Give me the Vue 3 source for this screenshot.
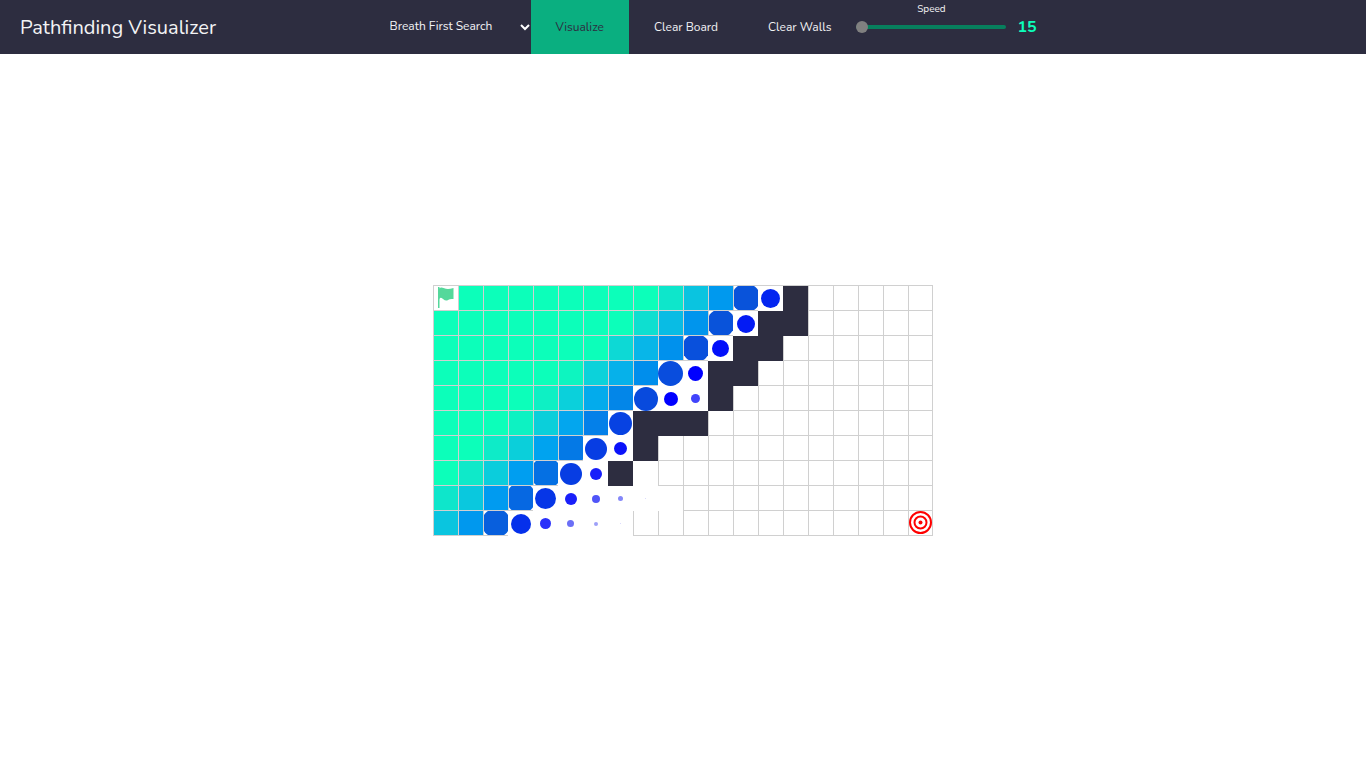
<script setup>
import { ref } from 'vue'

const algorithm = ref('Breath First Search')
const speed = ref(15)

const M = '#0cffba'
const dot = (size, color) => ({ size, color, kind: size > 23 ? 'dot wide' : 'dot' })
const oct = (radius, color) => ({ radius, color, kind: 'full' })
const fill = (color) => ({ radius: 0, color, kind: 'full' })
const times = (n, make) => Array.from({ length: n }, make)
const mint = (n) => times(n, () => fill(M))
const walls = (n) => times(n, () => ({ kind: 'wall' }))
const open = (n) => times(n, () => ({ kind: 'open' }))
const blank = (n) => times(n, () => ({ kind: 'blank' }))

const rows = [
  [{ kind: 'start' }, ...mint(8), fill('#0ee6cb'), fill('#0ac4e0'), fill('#0099ee'), oct(13, '#0953da'), dot(19, '#0425f0'), ...walls(1), ...open(5)],
  [...mint(8), fill('#0edfd0'), fill('#09bce4'), fill('#0095ed'), oct(14, '#0953da'), dot(18, '#031bf4'), ...walls(2), ...open(5)],
  [...mint(7), fill('#0dd9d5'), fill('#08b6e8'), fill('#0091ed'), oct(14, '#0950dc'), dot(17, '#020ffa'), ...walls(2), ...open(6)],
  [...mint(5), fill('#0df5c0'), fill('#0cd2da'), fill('#06b1ea'), fill('#008eec'), dot(25, '#094ddd'), dot(15, '#0000ff'), ...walls(2), ...open(7)],
  [...mint(4), fill('#0ef0c4'), fill('#0bd0db'), fill('#03abec'), fill('#0386e8'), dot(24, '#084add'), dot(14, '#0000ff'), dot(9, '#4144fb'), ...walls(1), ...open(8)],
  [...mint(3), fill('#0df2c2'), fill('#0bcfda'), fill('#03a6ee'), oct(7, '#0480e9'), dot(23, '#0742e2'), ...walls(3), ...open(9)],
  [...mint(2), fill('#0eebc8'), fill('#0bcfda'), fill('#00a3ef'), oct(8, '#0479e6'), dot(22, '#073de3'), dot(13, '#0a12fa'), ...walls(1), ...open(11)],
  [...mint(1), fill('#0fe9c9'), fill('#0bcddc'), fill('#009ef0'), oct(10, '#0570e3'), dot(22, '#073de3'), dot(12, '#171efa'), ...walls(1), ...blank(1), ...open(11)],
  [fill('#0ee6cb'), fill('#0ac8de'), fill('#009bf0'), oct(11, '#0668e2'), dot(21, '#0636e7'), dot(12, '#191ffa'), dot(8, '#5055f8'), dot(5, '#8487f9'), dot(1, '#cfd0fd'), ...blank(1), ...open(10)],
  [fill('#0ac5df'), fill('#0098ee'), oct(13, '#085fdd'), dot(20, '#0530eb'), dot(11, '#2a31fa'), dot(7, '#6b6ff6'), dot(4, '#9da0f8'), dot(1, '#cfd0fd'), ...open(11), { kind: 'target' }],
]

const shape = (c) => ({
  '--color': c.color,
  '--radius': `${c.radius || 0}px`,
  '--size': `${c.size || 0}px`,
})
</script>

<template>
  <div class="page">
    <header class="bar">
      <h1>Pathfinding Visualizer</h1>
      <div class="controls">
        <div class="picker">
          <select v-model="algorithm" aria-label="Algorithm">
            <option>Breath First Search</option>
            <option>Depth First Search</option>
          </select>
          <svg class="chevron" viewBox="0 0 10 7" aria-hidden="true"><path d="M1 1l4 4 4-4" /></svg>
        </div>
        <button type="button" class="primary">Visualize</button>
        <button type="button">Clear Board</button>
        <button type="button">Clear Walls</button>
        <div class="speed">
          <label for="speed">Speed</label>
          <input id="speed" v-model="speed" type="range" min="15" max="500" />
        </div>
        <output for="speed">{{ speed }}</output>
      </div>
    </header>
    <main>
      <div class="board">
        <div v-for="(row, r) in rows" :key="r" class="row">
          <div v-for="(c, i) in row" :key="i" class="cell" :class="c.kind" :style="shape(c)">
            <svg v-if="c.kind === 'start'" class="flag" viewBox="0 0 24 24">
              <path d="M4 1h1.500v21H4z" />
              <path d="M5 2.500Q7 1 9.500 2T14 3T19.500 2V13Q16 12.500 14 14T9 13T5 13.500z" />
            </svg>
            <svg v-if="c.kind === 'target'" class="rings" viewBox="0 0 23 23">
              <circle cx="11.500" cy="11.500" r="10.500" />
              <circle cx="11.500" cy="11.500" r="6" />
              <circle class="center" cx="11.500" cy="11.500" r="2" />
            </svg>
          </div>
        </div>
      </div>
    </main>
  </div>
</template>

<style>
body {
  margin: 0;
  background: #fff;
}
</style>

<style scoped>
.page {
  min-height: 100vh;
  display: flex;
  flex-direction: column;
  font-family: Nunito, Lato, "Open Sans", sans-serif;
}
.bar {
  height: 54px;
  display: grid;
  grid-template-columns: 27fr auto 23fr;
  align-items: center;
  background: #2d2d40;
  color: #f3f3f5;
}
h1 {
  margin: 0 0 0 20px;
  font-size: 20px;
  font-weight: 400;
  white-space: nowrap;
}
.controls {
  height: 54px;
  display: flex;
  align-items: center;
}
.picker {
  position: relative;
  width: 144px;
}
select {
  appearance: none;
  display: block;
  width: 100%;
  height: 54px;
  padding: 0 20px 2px 3px;
  border: 0;
  background: transparent;
  color: inherit;
  font: inherit;
  font-size: 12px;
}
option {
  color: #2d2d40;
}
.chevron {
  position: absolute;
  right: 1px;
  top: 24px;
  width: 10px;
  height: 7px;
  fill: none;
  stroke: #fff;
  stroke-width: 2;
  pointer-events: none;
}
button {
  height: 54px;
  padding: 0 25px;
  border: 0;
  background: transparent;
  color: inherit;
  font: inherit;
  font-size: 12px;
  white-space: nowrap;
}
.primary {
  background: #0aaf80;
  color: #2d2d40;
}
.speed {
  position: relative;
  display: flex;
}
.speed label {
  position: absolute;
  top: -20px;
  width: 100%;
  text-align: center;
  font-size: 10px;
  line-height: 16px;
}
input {
  appearance: none;
  width: 150px;
  height: 12px;
  margin: 0;
  background: transparent;
}
input::-webkit-slider-runnable-track {
  height: 4px;
  border-radius: 2px;
  background: #077f5d;
}
input::-webkit-slider-thumb {
  appearance: none;
  width: 12px;
  height: 12px;
  margin-top: -4px;
  border-radius: 50%;
  background: #808080;
}
output {
  margin-left: 11px;
  color: #0cffba;
  font-size: 16px;
  font-weight: 700;
}
main {
  flex: 1;
  display: flex;
  align-items: center;
  justify-content: center;
}
.board {
  display: flex;
  flex-direction: column;
  margin-bottom: 1px;
  border-top: 1px solid #d0d0d0;
}
.row {
  display: flex;
}
.cell {
  box-sizing: border-box;
  width: 25px;
  height: 25px;
  display: grid;
  place-items: center;
  border: solid #d0d0d0;
  border-width: 0 0 1px 1px;
}
.cell:last-child {
  border-right-width: 1px;
}
.full {
  overflow: hidden;
}
.full::before {
  content: "";
  width: 28px;
  height: 28px;
  margin: -2px;
  border-radius: var(--radius);
  background: var(--color);
}
.dot,
.blank {
  border-color: #fff;
}
.dot::before {
  content: "";
  width: var(--size);
  height: var(--size);
  margin: 1px 1px 0 0;
  border-radius: 50%;
  background: var(--color);
}
.wide::before {
  margin: 0 0 -1px -1px;
}
.wall {
  border-color: #2d2d40;
  background: #2d2d40;
}
.flag {
  width: 24px;
  height: 24px;
  fill: #55d89b;
}
.target {
  place-items: start;
}
.rings {
  width: 23px;
  height: 23px;
  fill: none;
  stroke: #f00;
  stroke-width: 2;
}
.rings .center {
  fill: #f00;
  stroke: none;
}
</style>
